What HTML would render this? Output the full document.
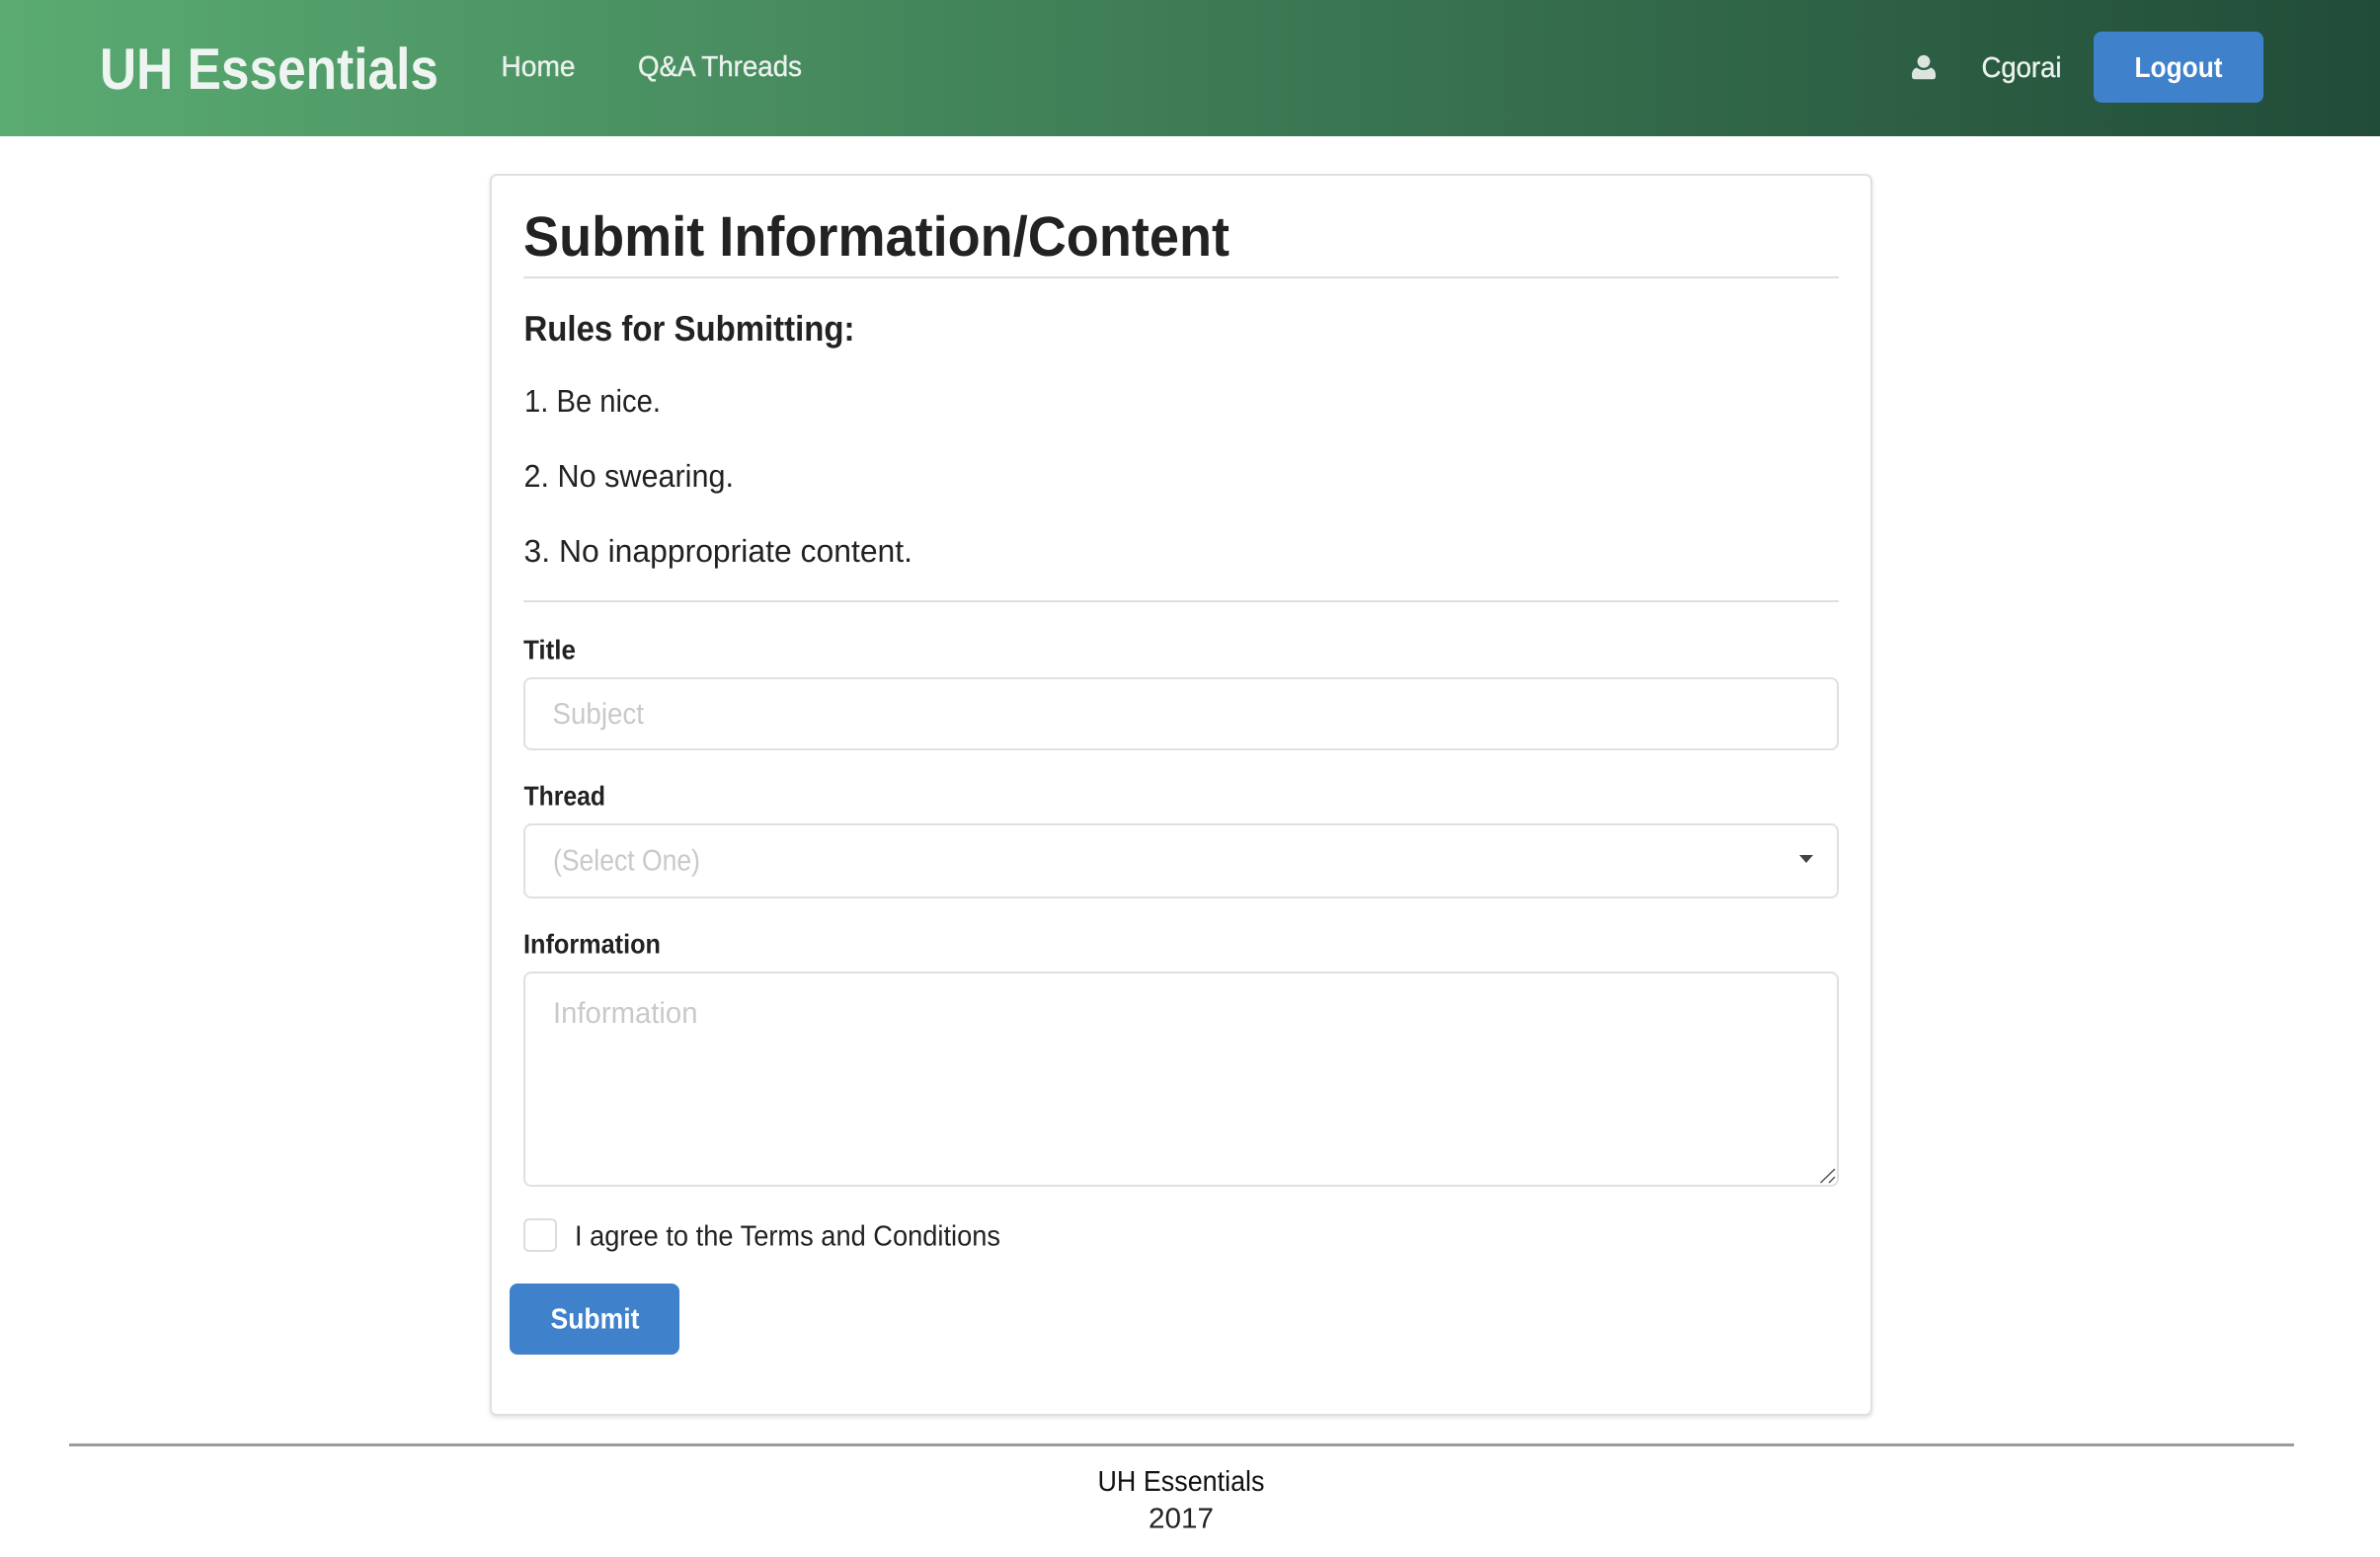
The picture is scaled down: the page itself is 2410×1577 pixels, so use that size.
<!DOCTYPE html>
<html lang="en">
<head>
<meta charset="utf-8">
<title>UH Essentials - Submit</title>
<style>
html,body{margin:0;padding:0;background:#fff;width:2410px;height:1577px;overflow:hidden}
*{box-sizing:border-box}
.abs{position:absolute;display:block}
nav{left:0;top:0;width:2410px;height:138px;background:linear-gradient(to right,#5aab72 0%,#214c38 100%)}
.btn{background:#4081cb;border:0;border-radius:8px;padding:0}
.card{left:496px;top:176px;width:1400px;height:1258px;background:#fff;border:2px solid #e0e0e0;border-radius:7px;box-shadow:0 2px 4px rgba(0,0,0,.12)}
.rule{background:#dfdfdf;height:2px;left:530px;width:1332px}
.field{left:530px;width:1332px;background:#fff;border:2px solid #e0e0e0;border-radius:8px;margin:0;padding:0;outline:0;-webkit-appearance:none;appearance:none}
textarea.field{resize:none}
.check{left:530px;top:1234px;width:34px;height:34px;margin:0;border:2px solid #dcdcdc;border-radius:6px;background:#fff;-webkit-appearance:none;appearance:none}
.foot{left:70px;top:1462px;width:2253px;height:3px;background:#9b9b9b;border:0;margin:0}
svg{position:absolute;left:0;top:0;pointer-events:none}
text{font-family:"Liberation Sans",sans-serif;text-rendering:geometricPrecision;fill:#222}
.b{font-weight:700}
.ph{fill:#c9c9c9}
.nv{fill:#e9f1ec;stroke:#e9f1ec;stroke-width:.4}
</style>
</head>
<body>
<nav class="abs"></nav>
<button class="btn abs" style="left:2120px;top:32px;width:172px;height:72px"></button>
<div class="card abs"></div>
<div class="rule abs" style="top:280px"></div>
<div class="rule abs" style="top:608px"></div>
<input class="field abs" style="top:686px;height:74px">
<div class="field abs" style="top:834px;height:76px"></div>
<textarea class="field abs" style="top:984px;height:218px"></textarea>
<input type="checkbox" class="check abs">
<button class="btn abs" style="left:516px;top:1300px;width:172px;height:72px"></button>
<hr class="foot abs">

<svg width="2410" height="1577" viewBox="0 0 2410 1577">
  <text class="b" x="101" y="90" font-size="59" textLength="343" lengthAdjust="spacingAndGlyphs" style="fill:#eef5f0">UH Essentials</text>
  <text class="nv" x="507.500" y="77" font-size="29" textLength="75" lengthAdjust="spacingAndGlyphs">Home</text>
  <text class="nv" x="646" y="77" font-size="29" textLength="166" lengthAdjust="spacingAndGlyphs">Q&amp;A Threads</text>
  <circle cx="1948" cy="62.3" r="6.4" fill="#dbe5de"/>
  <path d="M1941 68.5c2 1.6 4.300 2.500 7 2.500s5-.9 7-2.500c3 .8 5 3.500 5 7v2.300a2.400 2.400 0 0 1-2.400 2.400h-19.200a2.400 2.400 0 0 1-2.400-2.400v-2.300c0-3.500 2-6.200 5-7z" fill="#dbe5de"/>
  <text class="nv" x="2006.500" y="78" font-size="29" textLength="81" lengthAdjust="spacingAndGlyphs">Cgorai</text>
  <text class="b" x="2161.500" y="78" font-size="29" textLength="89" lengthAdjust="spacingAndGlyphs" style="fill:#fff">Logout</text>

  <text class="b" x="530" y="259" font-size="57" textLength="715" lengthAdjust="spacingAndGlyphs">Submit Information/Content</text>
  <text class="b" x="530.500" y="345" font-size="36" textLength="335" lengthAdjust="spacingAndGlyphs">Rules for Submitting:</text>
  <text x="531" y="417" font-size="32" textLength="138" lengthAdjust="spacingAndGlyphs">1. Be nice.</text>
  <text x="530.500" y="493" font-size="32" textLength="212.500" lengthAdjust="spacingAndGlyphs">2. No swearing.</text>
  <text x="530.500" y="569" font-size="32" textLength="393.500" lengthAdjust="spacingAndGlyphs">3. No inappropriate content.</text>

  <text class="b" x="530" y="667.500" font-size="27.500" textLength="53" lengthAdjust="spacingAndGlyphs">Title</text>
  <text class="ph" x="559.500" y="733" font-size="30" textLength="92.500" lengthAdjust="spacingAndGlyphs">Subject</text>
  <text class="b" x="530.500" y="815.500" font-size="27.500" textLength="82.500" lengthAdjust="spacingAndGlyphs">Thread</text>
  <text class="ph" x="560" y="881.500" font-size="30" textLength="149" lengthAdjust="spacingAndGlyphs">(Select One)</text>
  <path d="M1822 866h14l-7 8z" fill="#444"/>
  <text class="b" x="530" y="965.500" font-size="27.500" textLength="139" lengthAdjust="spacingAndGlyphs">Information</text>
  <text class="ph" x="560" y="1036" font-size="30" textLength="146.500" lengthAdjust="spacingAndGlyphs">Information</text>
  <path d="M1843.500 1198L1858 1184M1852 1198L1858 1192" stroke="#555" stroke-width="1.500" fill="none"/>

  <text x="582" y="1261.500" font-size="29" textLength="431" lengthAdjust="spacingAndGlyphs">I agree to the Terms and Conditions</text>
  <text class="b" x="557.500" y="1345.500" font-size="29" textLength="90" lengthAdjust="spacingAndGlyphs" style="fill:#fff">Submit</text>

  <text x="1111.500" y="1510" font-size="29" textLength="169" lengthAdjust="spacingAndGlyphs" style="fill:#111">UH Essentials</text>
  <text x="1163" y="1547.500" font-size="29" textLength="66" lengthAdjust="spacingAndGlyphs">2017</text>
</svg>
</body>
</html>
